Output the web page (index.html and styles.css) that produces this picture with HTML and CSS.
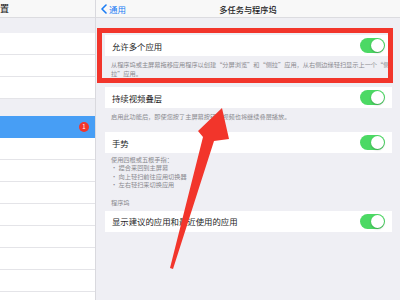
FILE: index.html
```html
<!DOCTYPE html>
<html lang="zh">
<head>
    <meta charset="UTF-8">
    <meta name="viewport" content="width=device-width, initial-scale=1.0">
    <title>多任务与程序坞</title>
    <link rel="stylesheet" href="styles.css">
</head>
<body>
    <div class="screen">
        <aside class="sidebar">
            <div class="side-head"><span class="side-title">置</span></div>
            <div class="side-gap"></div>
            <div class="side-row"></div>
            <div class="side-row"></div>
            <div class="side-row"></div>
            <div class="side-gap short"></div>
            <div class="side-row active"><span class="badge">1</span></div>
            <div class="side-row"></div>
            <div class="side-row"></div>
            <div class="side-row"></div>
            <div class="side-row"></div>
            <div class="side-row"></div>
            <div class="side-row"></div>
            <div class="side-row"></div>
        </aside>
        <main class="main">
            <div class="nav">
                <span class="back">
                    <svg width="6" height="10" viewBox="0 0 6 10"><path d="M5 1 L1 5 L5 9" fill="none" stroke="#1a7cf5" stroke-width="1.6" stroke-linecap="round" stroke-linejoin="round"/></svg>
                    通用
                </span>
                <span class="nav-title">多任务与程序坞</span>
                <span></span>
            </div>
            <div class="content">
                <div class="cell">
                    <span>允许多个应用</span>
                    <span class="toggle"></span>
                </div>
                <p class="note first">从程序坞或主屏幕拖移应用程序以创建“分屏浏览”和“侧拉”应用，从右侧边缘轻扫显示上一个“侧<br>拉”应用。</p>
                <div class="cell">
                    <span>持续视频叠层</span>
                    <span class="toggle"></span>
                </div>
                <p class="note">启用此功能后，即使您按了主屏幕按钮，视频也将继续叠层播放。</p>
                <div class="cell">
                    <span>手势</span>
                    <span class="toggle"></span>
                </div>
                <p class="note list">使用四根或五根手指：<br>• 捏合来回到主屏幕<br>• 向上轻扫前往应用切换器<br>• 左右轻扫来切换应用</p>
                <p class="group-title">程序坞</p>
                <div class="cell">
                    <span>显示建议的应用和最近使用的应用</span>
                    <span class="toggle"></span>
                </div>
            </div>
        </main>
        <!-- annotation drawn over the screenshot -->
        <svg class="markup" width="400" height="300" viewBox="0 0 400 300">
            <rect x="99.5" y="30.5" width="291" height="50" fill="none" stroke="#f2352b" stroke-width="5"/>
            <polygon points="222,108 229,139 214,141 173,269 170,268 203,137 198,131" fill="#f2352b"/>
        </svg>
    </div>
</body>
</html>
```

FILE: styles.css
```css
body {
    margin: 0;
    font-family: "Noto Sans CJK SC", "Noto Sans", sans-serif;
    color: #1c1c1e;
}
.screen {
    position: relative;
    width: 400px;
    height: 300px;
    display: flex;
    overflow: hidden;
    background-color: #efeff4;
}
/* left settings list */
.sidebar {
    width: 95px;
    flex-shrink: 0;
    background-color: #fff;
    border-right: 1px solid #d9d9de;
    overflow: hidden;
}
.side-head {
    height: 17px;
    background-color: #f8f8f8;
    border-bottom: 1px solid #dcdce0;
    display: flex;
    align-items: center;
}
.side-title {
    font-size: 9px;
    font-weight: 500;
}
.side-gap {
    height: 15px;
    background-color: #efeff4;
}
.side-gap.short {
    height: 17px;
}
.side-row {
    height: 21px;
    border-bottom: 1px solid #e4e4e8;
    display: flex;
    align-items: center;
    justify-content: flex-end;
    padding-right: 6px;
}
.side-row.active {
    background-color: #479ef5;
    border-bottom-color: #479ef5;
}
.badge {
    width: 10px;
    height: 10px;
    border-radius: 50%;
    background-color: #f2352b;
    color: #fff;
    font-size: 6px;
    line-height: 10px;
    text-align: center;
}
/* right detail pane */
.main {
    flex: 1;
}
.nav {
    height: 17px;
    background-color: #f8f8f8;
    border-bottom: 1px solid #dcdce0;
    display: grid;
    grid-template-columns: 1fr auto 1fr;
    align-items: center;
}
.back {
    display: flex;
    align-items: center;
    gap: 2px;
    padding-left: 5px;
    color: #1a7cf5;
    font-size: 8.5px;
}
.nav-title {
    font-size: 8.2px;
    font-weight: 500;
}
.content {
    padding-top: 17px;
}
.cell {
    height: 21px;
    margin: 0 8px 0 9px;
    padding: 0 7px;
    background-color: #fff;
    display: flex;
    align-items: center;
    justify-content: space-between;
    font-size: 8.4px;
}
.toggle {
    position: relative;
    width: 25px;
    height: 15px;
    border-radius: 8px;
    background-color: #4cd964;
}
.toggle::after {
    content: "";
    position: absolute;
    right: 1px;
    top: 1px;
    width: 13px;
    height: 13px;
    border-radius: 50%;
    background-color: #fff;
    box-shadow: 0 1px 2px rgba(0, 0, 0, 0.25);
}
.note {
    margin: 0;
    padding: 4px 10px 11px 15px;
    font-size: 6.2px;
    line-height: 9px;
    color: #8a8a8f;
    white-space: nowrap;
}
.note.first {
    padding-bottom: 9px;
}
.note.list {
    padding-top: 3px;
    padding-bottom: 8px;
    line-height: 8.4px;
}
.group-title {
    margin: 0;
    padding: 0 15px 4px;
    font-size: 6.2px;
    line-height: 9px;
    color: #8a8a8f;
}
.markup {
    position: absolute;
    left: 0;
    top: 0;
    pointer-events: none;
}
```
